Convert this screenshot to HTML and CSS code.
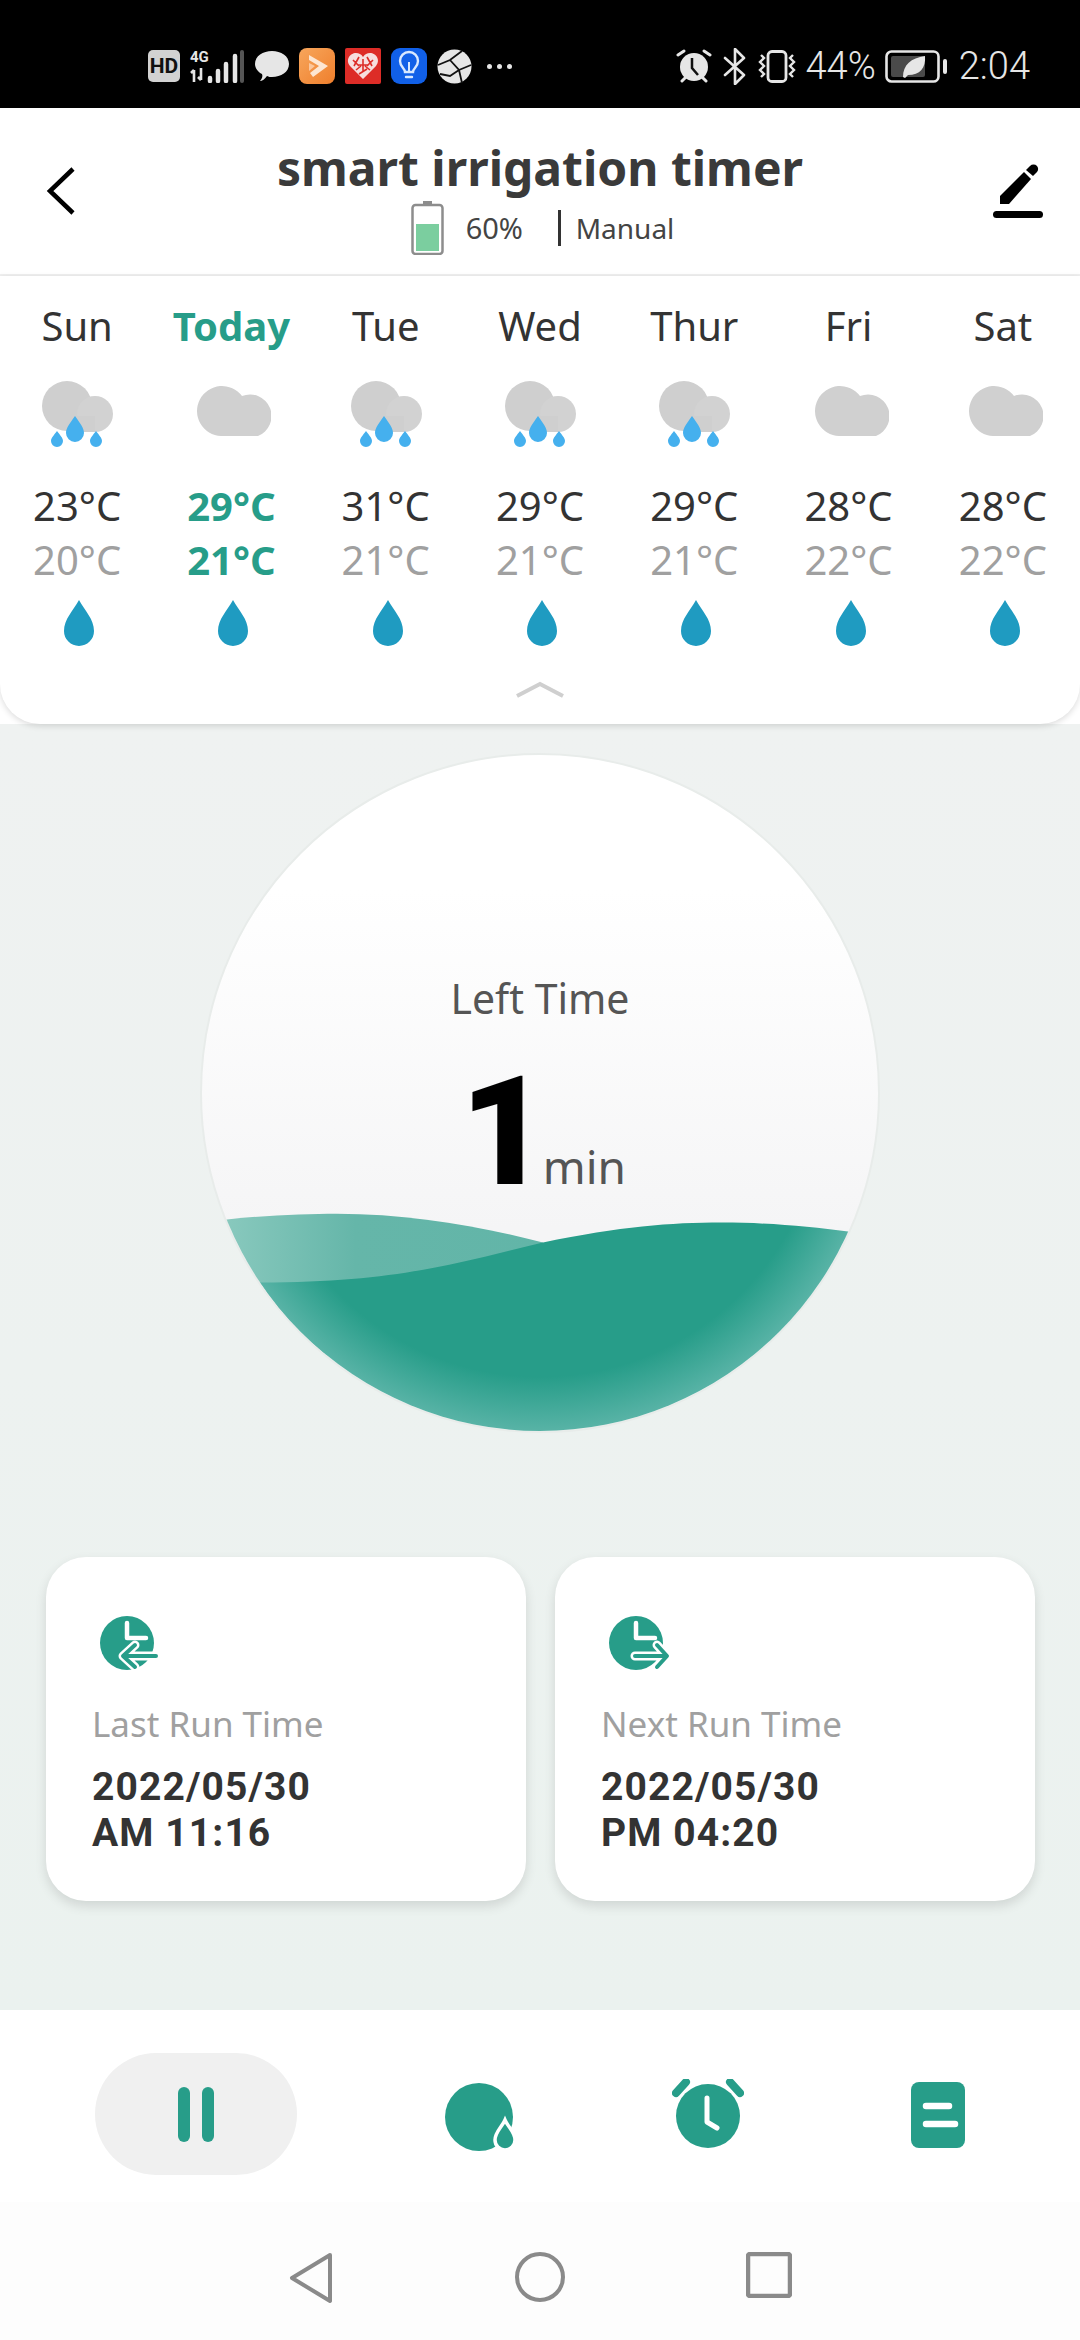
FILE: index.html
```html
<!DOCTYPE html>
<html>
<head>
	<meta charset="utf-8">
	<title>smart irrigation timer</title>
	<link rel="stylesheet" href="styles.css">
</head>
<body>
	<svg class="defs" width="0" height="0">
		<defs>
			<symbol id="rain" viewBox="0 0 80 70">
				<circle cx="30" cy="27" r="25" fill="#cfcfcf"/>
				<circle cx="58" cy="35" r="18" fill="#d2d2d2"/>
				<path d="M30 37h28v16h-28z" fill="#cfcfcf"/>
				<path d="M38 37c5 7 9 12 9 17a9 9 0 0 1-18 0c0-5 4-10 9-17z" fill="#45b0ee"/>
				<path d="M20 52c3 4 6 7 6 10a6 6 0 0 1-12 0c0-3 3-6 6-10z" fill="#45b0ee"/>
				<path d="M59 52c3 4 6 7 6 10a6 6 0 0 1-12 0c0-3 3-6 6-10z" fill="#45b0ee"/>
			</symbol>
			<symbol id="cloud" viewBox="0 0 80 70">
				<path d="M30 57a25 25 0 1 1 21-40a18 18 0 1 1 16 40z" fill="#d0d0d0"/>
			</symbol>
			<symbol id="drop" viewBox="0 0 30 46">
				<path d="M15 0c6 11 15 19 15 31a15 15 0 0 1-30 0c0-12 9-20 15-31z" fill="#1f9bc1"/>
			</symbol>
		</defs>
	</svg>

	<div class="status-bar">
		<div class="status-left">
			<span class="hd">HD</span>
			<span class="net">
				<span class="net-type">4G</span>
				<svg class="net-arrows" width="18" height="14" viewBox="0 0 18 14"><path d="M4 14V2M1 5l3-3M11 0v12M8 9l3 3" stroke="#e6e6e6" stroke-width="2.6" fill="none"/></svg>
			</span>
			<svg class="signal" width="38" height="33" viewBox="0 0 38 33"><path d="M3 31v-3M11 31V21M19 31V14M28 31V6" stroke="#e6e6e6" stroke-width="4.500" stroke-linecap="round"/><path d="M35 31V2" stroke="#555" stroke-width="4" stroke-linecap="round"/></svg>
			<svg class="ic-chat" width="34" height="32" viewBox="0 0 34 32"><path d="M17 1c9 0 17 5 17 13s-8 13-17 13c-2 0-3 0-5-1-2 3-5 5-7 5 2-2 3-5 2-7-4-2-7-6-7-10C0 6 8 1 17 1z" fill="#e6e6e6"/></svg>
			<svg class="ic-app" width="36" height="36" viewBox="0 0 36 36"><defs><linearGradient id="org" x1="0" y1="0" x2="1" y2="1"><stop offset="0" stop-color="#f7a65c"/><stop offset="1" stop-color="#ef7f2c"/></linearGradient></defs><rect width="36" height="36" rx="8" fill="url(#org)"/><path d="M10 7l19 11-15 11-3-4 9-7-10-6z" fill="#fde6d2"/><path d="M10 15l6 3-6 5z" fill="#fbc79d"/></svg>
			<svg class="ic-app" width="36" height="36" viewBox="0 0 36 36"><rect width="36" height="36" rx="2" fill="#dd2c27"/><path d="M18 31L5 18c-5-6 0-13 6-13 3 0 5 1 7 4 2-3 4-4 7-4 6 0 11 7 6 13z" fill="#f7dede"/><path d="M8 12l6 6M14 9l-5 9M18 11v14M13 17h10M28 12l-6 6M22 9l5 9M11 22l5-4M25 22l-5-4M14 26l8-5" stroke="#dd2c27" stroke-width="1.6"/></svg>
			<svg class="ic-app" width="36" height="36" viewBox="0 0 36 36"><rect width="36" height="36" rx="9" fill="#1160e8"/><path d="M14 24c0-4-5-5-5-11a9 9 0 0 1 18 0c0 6-5 7-5 11zM15 29h6" stroke="#d8e8ff" stroke-width="2.4" fill="none" stroke-linecap="round"/><path d="M18 14v9" stroke="#d8e8ff" stroke-width="2"/></svg>
			<svg class="ic-app" width="35" height="35" viewBox="0 0 35 35"><circle cx="17.5" cy="17.5" r="17" fill="#e6e6e6"/><path d="M1 16l12-5 12-9M13 11l9 10 3 13M22 21l12-5M3 25l10 2 9-6" stroke="#111" stroke-width="1.8" fill="none"/></svg>
			<span class="more"><i></i><i></i><i></i></span>
		</div>
		<div class="status-right">
			<svg width="36" height="34" viewBox="0 0 36 34"><circle cx="18" cy="18" r="14" fill="#e6e6e6"/><path d="M16 9v10l6 7" stroke="#111" stroke-width="2.5" fill="none"/><path d="M2 6l6-4M34 6l-6-4M6 32l3-3M30 32l-3-3" stroke="#e6e6e6" stroke-width="3" stroke-linecap="round"/></svg>
			<svg width="23" height="37" viewBox="0 0 23 37"><path d="M2 10l19 17-9 9V1l9 9L2 27" stroke="#e6e6e6" stroke-width="2.6" fill="none" stroke-linejoin="round" stroke-linecap="round"/></svg>
			<svg width="40" height="33" viewBox="0 0 40 33"><rect x="11" y="1.500" width="18" height="30" rx="4" stroke="#e6e6e6" stroke-width="2.8" fill="none"/><path d="M4 5l3 3-4 4 4 4-4 4 4 4-3 3M36 5l-3 3 4 4-4 4 4 4-4 4 3 3" stroke="#e6e6e6" stroke-width="2.4" fill="none"/></svg>
			<span class="status-text pct">44%</span>
			<svg width="63" height="33" viewBox="0 0 63 33"><rect x="1.500" y="1.500" width="52" height="30" rx="5" stroke="#e6e6e6" stroke-width="2.6" fill="none"/><rect x="6" y="6" width="34" height="21" rx="2" fill="#4a4a4a"/><path d="M18 27c0-12 8-19 22-21 1 12-5 19-17 19l-3 3z" fill="#e6e6e6"/><rect x="58" y="9" width="4" height="15" rx="2" fill="#e6e6e6"/></svg>
			<span class="status-text time">2:04</span>
		</div>
	</div>

	<header class="top-bar">
		<svg class="back" width="30" height="48" viewBox="0 0 30 48"><path d="M27 2L4 24l23 22" stroke="#000" stroke-width="4.5" fill="none"/></svg>
		<div class="top-title">
			<h1>smart irrigation timer</h1>
			<div class="top-sub">
				<svg class="bat" width="33" height="55" viewBox="0 0 33 55"><path d="M12 1h9v5h-9z" fill="#8d8d8d"/><rect x="1.500" y="5" width="30" height="49" rx="3" fill="#fff" stroke="#8d8d8d" stroke-width="2.5"/><rect x="5" y="24" width="23" height="27" fill="#7bce9f"/></svg>
				<span class="bat-pct">60%</span>
				<span class="mode">Manual</span>
			</div>
		</div>
		<svg class="edit" width="80" height="80" viewBox="0 0 80 80">
			<path d="M20 42L44 18l7 7L29 50h-9z" fill="#000"/>
			<path d="M46 16l4-4a5 5 0 0 1 7 0a5 5 0 0 1 0 6l-4 4z" fill="#000"/>
			<rect x="13" y="57" width="50" height="7" rx="3.500" fill="#000"/>
		</svg>
	</header>

	<section class="forecast">
		<div class="days">
			<div class="day">
				<span class="day-name">Sun</span>
				<svg class="wx"><use href="#rain"/></svg>
				<span class="high">23°C</span><span class="low">20°C</span>
				<svg class="drop"><use href="#drop"/></svg>
			</div>
			<div class="day today">
				<span class="day-name">Today</span>
				<svg class="wx"><use href="#cloud"/></svg>
				<span class="high">29°C</span><span class="low">21°C</span>
				<svg class="drop"><use href="#drop"/></svg>
			</div>
			<div class="day">
				<span class="day-name">Tue</span>
				<svg class="wx"><use href="#rain"/></svg>
				<span class="high">31°C</span><span class="low">21°C</span>
				<svg class="drop"><use href="#drop"/></svg>
			</div>
			<div class="day">
				<span class="day-name">Wed</span>
				<svg class="wx"><use href="#rain"/></svg>
				<span class="high">29°C</span><span class="low">21°C</span>
				<svg class="drop"><use href="#drop"/></svg>
			</div>
			<div class="day">
				<span class="day-name">Thur</span>
				<svg class="wx"><use href="#rain"/></svg>
				<span class="high">29°C</span><span class="low">21°C</span>
				<svg class="drop"><use href="#drop"/></svg>
			</div>
			<div class="day">
				<span class="day-name">Fri</span>
				<svg class="wx"><use href="#cloud"/></svg>
				<span class="high">28°C</span><span class="low">22°C</span>
				<svg class="drop"><use href="#drop"/></svg>
			</div>
			<div class="day">
				<span class="day-name">Sat</span>
				<svg class="wx"><use href="#cloud"/></svg>
				<span class="high">28°C</span><span class="low">22°C</span>
				<svg class="drop"><use href="#drop"/></svg>
			</div>
		</div>
		<svg class="collapse" width="50" height="18" viewBox="0 0 50 18"><path d="M2 16L25 4l23 12" stroke="#cfcfcf" stroke-width="4" fill="none"/></svg>
	</section>

	<main class="content">
		<div class="dial">
			<svg class="wave" viewBox="0 0 678 678">
				<defs>
					<linearGradient id="waveLight" x1="0" y1="0" x2="1" y2="0">
						<stop offset="0" stop-color="#8fccc1"/>
						<stop offset="0.45" stop-color="#65b6a9"/>
						<stop offset="1" stop-color="#62b5a8"/>
					</linearGradient>
					<radialGradient id="waveDark" gradientUnits="userSpaceOnUse" cx="339" cy="339" r="339">
						<stop offset="0" stop-color="#279d89"/>
						<stop offset="0.84" stop-color="#279d89"/>
						<stop offset="1" stop-color="#58b3a6"/>
					</radialGradient>
				</defs>
				<path d="M0 469C50 462 100 460 135 460C210 460 280 473 342 489V600H0z" fill="url(#waveLight)"/>
				<path d="M0 530L59 529C200 529 260 508 342 489C420 473 470 469 521 469C570 469 610 473 648 478L678 483V678H0z" fill="url(#waveDark)"/>
			</svg>
			<span class="dial-label">Left Time</span>
			<div class="dial-value"><strong>1</strong><span>min</span></div>
		</div>

		<div class="run-cards">
			<div class="run-card">
				<svg class="run-icon" width="80" height="80" viewBox="0 0 80 80">
					<circle cx="37" cy="42" r="27" fill="#279d89"/>
					<path d="M37 22v15h19" stroke="#fff" stroke-width="4.500" fill="none" stroke-linecap="round" stroke-linejoin="round"/>
					<path d="M45 44L33 55l12 11M36 55h30" stroke="#fff" stroke-width="9" fill="none" stroke-linecap="round" stroke-linejoin="round"/>
					<path d="M45 44L33 55l12 11M36 55h30" stroke="#279d89" stroke-width="4" fill="none" stroke-linecap="round" stroke-linejoin="round"/>
				</svg>
				<span class="run-label">Last Run Time</span>
				<span class="run-time">2022/05/30<br>AM 11:16</span>
			</div>
			<div class="run-card">
				<svg class="run-icon" width="80" height="80" viewBox="0 0 80 80">
					<circle cx="37" cy="42" r="27" fill="#279d89"/>
					<path d="M37 22v15h19" stroke="#fff" stroke-width="4.500" fill="none" stroke-linecap="round" stroke-linejoin="round"/>
					<path d="M58 44l10 11-10 11M36 55h30" stroke="#fff" stroke-width="9" fill="none" stroke-linecap="round" stroke-linejoin="round"/>
					<path d="M58 44l10 11-10 11M36 55h30" stroke="#279d89" stroke-width="4" fill="none" stroke-linecap="round" stroke-linejoin="round"/>
				</svg>
				<span class="run-label">Next Run Time</span>
				<span class="run-time">2022/05/30<br>PM 04:20</span>
			</div>
		</div>
	</main>

	<nav class="tabs">
		<div class="tab tab-pause">
			<svg width="36" height="55" viewBox="0 0 36 55"><rect width="12" height="55" rx="6" fill="#279d89"/><rect x="24" width="12" height="55" rx="6" fill="#279d89"/></svg>
		</div>
		<svg class="tab tab-water" width="74" height="72" viewBox="0 0 74 72">
			<circle cx="34" cy="35" r="34" fill="#279d89"/>
			<path d="M60 38c3 7 10 12 10 20a10 10 0 0 1-20 0c0-8 7-13 10-20z" fill="#279d89" stroke="#fff" stroke-width="3.500"/>
		</svg>
		<svg class="tab tab-alarm" width="72" height="70" viewBox="0 0 72 70">
			<circle cx="36" cy="37" r="32" fill="#279d89"/>
			<path d="M4 14L14 3M68 14L58 3" stroke="#279d89" stroke-width="8" stroke-linecap="round"/>
			<path d="M35 19v24l10 6" stroke="#fff" stroke-width="5" fill="none" stroke-linecap="round" stroke-linejoin="round"/>
		</svg>
		<svg class="tab tab-log" width="54" height="66" viewBox="0 0 54 66">
			<rect width="54" height="66" rx="8" fill="#279d89"/>
			<path d="M15 24h23M15 42h29" stroke="#fff" stroke-width="6.500" stroke-linecap="round"/>
		</svg>
	</nav>

	<div class="nav-bar">
		<svg width="46" height="52" viewBox="0 0 46 52"><path d="M42 3L4 26l38 23z" stroke="#8a8a8a" stroke-width="4" fill="none" stroke-linejoin="round"/></svg>
		<svg width="50" height="50" viewBox="0 0 50 50"><circle cx="25" cy="25" r="23" stroke="#8a8a8a" stroke-width="4" fill="none"/></svg>
		<svg width="46" height="46" viewBox="0 0 46 46"><rect x="2" y="2" width="42" height="42" rx="2" stroke="#8a8a8a" stroke-width="4.500" fill="none"/></svg>
	</div>
</body>
</html>
```

FILE: styles.css
```css
*{
	margin:0;
	padding:0;
	box-sizing:border-box;
}
body{
	width:1080px;
	height:2340px;
	overflow:hidden;
	display:flex;
	flex-direction:column;
	font-family:"Noto Sans","Noto Sans CJK SC",sans-serif;
	background:#fff;
	color:#333;
}
.defs{
	position:absolute;
}
svg{
	display:block;
	flex:none;
}

/* status bar */
.status-bar{
	height:108px;
	background:#000;
	padding:24px 50px 0 148px;
	display:flex;
	align-items:center;
	justify-content:space-between;
	color:#e6e6e6;
}
.status-left,.status-right{
	display:flex;
	align-items:center;
}
.status-left{
	gap:9px;
}
.status-right{
	gap:11px;
}
.hd{
	width:32px;
	height:32px;
	border-radius:5px;
	background:#d2d2d2;
	color:#111;
	font:bold 21px/32px "Roboto",sans-serif;
	text-align:center;
}
.net{
	width:18px;
	margin-left:1px;
	margin-right:-10px;
	display:flex;
	flex-direction:column;
	gap:3px;
}
.net-type{
	font:bold 15px/15px "Roboto",sans-serif;
	color:#e6e6e6;
}
.signal{
	margin-right:1px;
}
.ic-app{
	margin-left:1px;
}
.more{
	display:flex;
	gap:5px;
	margin-left:6px;
}
.more i{
	width:5px;
	height:5px;
	border-radius:50%;
	background:#e6e6e6;
}
.status-text{
	font:300 38px/38px "Roboto",sans-serif;
	color:#e6e6e6;
}
.pct{
	margin:0 -2px 0 -2px;
}
.time{
	margin-left:0;
}

/* title */
.top-bar{
	height:168px;
	padding:0 20px 0 46px;
	display:flex;
	align-items:center;
	justify-content:space-between;
	border-bottom:2px solid #f0f0f0;
}
.top-bar .edit{
	margin-top:6px;
}
.top-title{
	display:flex;
	flex-direction:column;
	align-items:center;
	margin-left:24px;
	padding-top:13px;
}
.top-title h1{
	font-size:48px;
	line-height:56px;
	font-weight:700;
	color:#3a3a3a;
}
.top-sub{
	display:flex;
	align-items:center;
	font-size:29px;
	line-height:36px;
	color:#444;
	margin-top:4px;
	padding-left:5px;
}
.bat-pct{
	margin-left:22px;
	width:92px;
}
.mode{
	border-left:3px solid #333;
	padding-left:15px;
	font-size:28px;
}

/* forecast */
.forecast{
	height:448px;
	background:#fff;
	border-radius:0 0 40px 40px;
	box-shadow:0 2px 6px rgba(0,0,0,.14);
	position:relative;
	display:flex;
	flex-direction:column;
	align-items:center;
}
.days{
	width:100%;
	display:grid;
	grid-template-columns:repeat(7,1fr);
	padding-top:23px;
}
.day{
	display:flex;
	flex-direction:column;
	align-items:center;
}
.day-name{
	font-size:40px;
	line-height:54px;
	color:#333;
}
.wx{
	width:80px;
	height:70px;
	margin-top:26px;
}
.high,.low{
	font-size:40px;
	line-height:54px;
}
.high{
	margin-top:30px;
	color:#333;
}
.low{
	color:#a0a0a0;
}
.drop{
	width:30px;
	height:46px;
	margin:13px 0 0 4px;
}
.today .day-name,.today .high,.today .low{
	color:#279d89;
	font-weight:700;
}
.collapse{
	margin-top:34px;
}

/* dial */
.content{
	flex:1;
	background:linear-gradient(180deg,#eff2f1,#ebf2ef);
	display:flex;
	flex-direction:column;
	align-items:center;
	padding-top:29px;
}
.dial{
	width:680px;
	height:680px;
	border-radius:50%;
	border:2px solid #e8ecea;
	background:linear-gradient(180deg,#fff 20%,#f5f5f6 70%);
	position:relative;
	overflow:hidden;
	display:flex;
	flex-direction:column;
	align-items:center;
	padding-top:216px;
}
.wave{
	position:absolute;
	left:0;
	top:0;
	width:676px;
	height:676px;
}
.dial-label{
	font-size:41px;
	line-height:54px;
	color:#555;
	position:relative;
}
.dial-value{
	display:flex;
	align-items:baseline;
	margin-top:17px;
	padding-left:6px;
	position:relative;
}
.dial-value strong{
	font-size:153px;
	line-height:180px;
	font-weight:900;
	color:#000;
	font-family:"Roboto",sans-serif;
}
.dial-value span{
	font-size:46px;
	color:#555;
	margin-left:-6px;
}

/* last and next run */
.run-cards{
	width:100%;
	padding:0 45px 0 46px;
	margin-top:124px;
	display:flex;
	gap:29px;
}
.run-card{
	flex:1;
	height:344px;
	background:#fff;
	border-radius:40px;
	box-shadow:0 5px 12px rgba(0,0,0,.12);
	padding:44px 46px 0;
	display:flex;
	flex-direction:column;
}
.run-icon{
	margin-left:-2px;
}
.run-label{
	font-size:35px;
	line-height:46px;
	color:#a0a0a0;
	margin-top:20px;
}
.run-time{
	font:700 39px/46px "Roboto",sans-serif;
	letter-spacing:1.1px;
	color:#333;
	margin-top:17px;
}

/* bottom tabs */
.tabs{
	height:192px;
	background:#fff;
	display:flex;
	align-items:flex-start;
	padding:43px 0 0 95px;
}
.tab-pause{
	width:202px;
	height:122px;
	border-radius:61px;
	background:#f0f0f0;
	display:flex;
	align-items:center;
	justify-content:center;
}
.tab-water{
	margin:29px 0 0 148px;
}
.tab-alarm{
	margin:26px 0 0 153px;
}
.tab-log{
	margin:29px 0 0 167px;
}
.nav-bar{
	height:138px;
	background:#fdfdfd;
	display:flex;
	align-items:flex-start;
	justify-content:center;
	gap:181px;
	padding-top:50px;
}
```
